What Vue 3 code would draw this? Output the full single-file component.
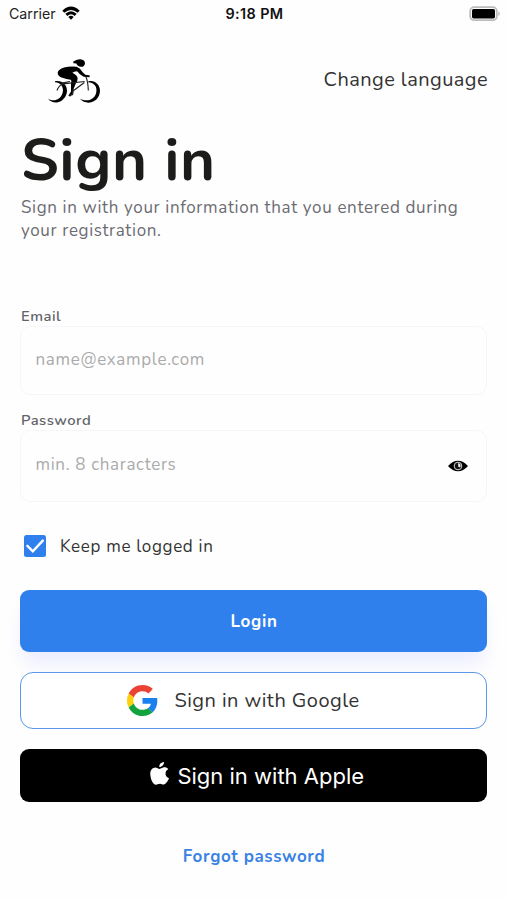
<script setup>
import { ref } from 'vue'

const email = ref('')
const password = ref('')
const showPassword = ref(false)
const keepLoggedIn = ref(true)
</script>

<template>
  <main class="screen">
    <div class="status">
      <div class="carrier">
        <span>Carrier</span>
        <svg class="wifi" viewBox="0 0 54 42">
          <path d="M1 14Q27-11 53 14L47 20.5Q27 3 7 20.5Z" />
          <path d="M10 23.5Q27 8 44 23.5L38 30Q27 20 16 30Z" />
          <path d="M19 33Q27 26 35 33L27 41Z" />
        </svg>
      </div>
      <strong class="clock">9:18 PM</strong>
      <svg class="battery" viewBox="0 0 32 16">
        <rect x="1.2" y="1.2" width="26.6" height="13" rx="4" fill="#fff" stroke="#bcbcbc" stroke-width="1.8" />
        <rect x="3" y="3" width="23" height="9.4" rx="1.6" fill="#000" />
        <path d="M29.5 5.2Q32 7.7 29.5 10.2Z" fill="#aaa" />
      </svg>
    </div>

    <header class="top">
      <svg class="logo" viewBox="24 24 156 134">
        <path d="M99 35Q110 26 121 27Q135 28 135 39Q134 50 123 50Q112 49 109 40L101 39Z" />
        <path d="M53 68Q55 57 72 52Q92 47 110 50Q121 54 128 66L136 74L150 76L148 81L131 80Q118 73 112 64Q106 62 97 68Q111 75 113 84Q113 92 107 101L101 116L100 127L91 139L85 137L93 124L93 99Q96 92 92 89Q80 88 67 83Q53 79 53 68Z" />
        <path d="M45 93C72 88 88 113 78 135C68 158 40 165 24 146C43 156 60 149 67 131C73 113 65 98 45 96Z" />
        <path d="M145 93C168 88 184 108 179 129C173 158 138 167 120 146C142 156 162 149 168 130C173 110 164 98 145 96Z" />
        <path class="frame" d="M51 121Q57 105 70 101L134 94M64 99L90 94M133 97L101 121M137 78Q144 92 145 121M99 118L98 133L87 137" />
      </svg>
      <a class="language">Change language</a>
    </header>

    <h1>Sign in</h1>
    <p class="intro">Sign in with your information that you entered during<br>your registration.</p>

    <form @submit.prevent>
      <label class="field-label" for="email">Email</label>
      <div class="field email">
        <input id="email" v-model="email" type="text" placeholder="name@example.com">
      </div>

      <label class="field-label second" for="password">Password</label>
      <div class="field password">
        <input id="password" v-model="password" :type="showPassword ? 'text' : 'password'" placeholder="min. 8 characters">
        <svg class="eye" viewBox="0 0 60 36" @click="showPassword = !showPassword">
          <path d="M0 18Q14 2 30 2Q46 2 60 18Q46 34 30 34Q14 34 0 18Z" />
          <circle cx="30" cy="18" r="11.5" fill="#111" stroke="#d2d2d2" stroke-width="3" />
          <path d="M30 10Q39 11 38 19Q36 24 31 20Z" fill="#eee" />
        </svg>
      </div>

      <label class="keep">
        <input v-model="keepLoggedIn" type="checkbox" class="native">
        <span class="check">
          <svg v-if="keepLoggedIn" viewBox="0 0 22 22"><path d="M3.4 10.8L8.8 16.3L18.8 5.6" /></svg>
        </span>
        <span class="keep-text">Keep me logged in</span>
      </label>

      <button class="login" type="submit"><span>Login</span></button>
      <button class="google" type="button">
        <svg class="g" viewBox="0 0 48 48">
          <path fill="#ea4335" d="M24 9.5c3.54 0 6.71 1.22 9.21 3.6l6.85-6.85C35.9 2.38 30.47 0 24 0 14.62 0 6.51 5.38 2.56 13.22l7.98 6.19C12.43 13.72 17.74 9.5 24 9.5z" />
          <path fill="#1a80ed" d="M46.98 24.55c0-1.57-.15-3.09-.38-4.55H24v9.02h12.94c-.58 2.96-2.26 5.48-4.78 7.18l7.73 6c4.51-4.18 7.09-10.36 7.09-17.65z" />
          <path fill="#fbd00c" d="M10.53 28.59A14.5 14.5 0 0 1 9.77 24c0-1.6.27-3.14.76-4.59l-7.98-6.19A23.9 23.9 0 0 0 0 24c0 3.88.92 7.54 2.56 10.78z" />
          <path fill="#13a33e" d="M24 48c6.48 0 11.93-2.13 15.89-5.81l-7.73-6c-2.15 1.45-4.92 2.3-8.16 2.3-6.26 0-11.57-4.22-13.47-9.91l-7.98 6.19C6.51 42.62 14.62 48 24 48z" />
        </svg>
        <span>Sign in with Google</span>
      </button>
      <button class="apple" type="button">
        <svg class="fruit" viewBox="0 0 57 69">
          <path d="M28 21C22 19 19 16 14 17C4 18 0 28 1 38C2 52 9 67 18 68C22 68 24 65 30 65C36 65 38 69 43 67C49 65 55 55 57 49C49 46 45 39 47 31C48 27 51 24 55 22C50 15 43 15 38 17Z" />
          <path d="M28 15C27 7 33 1 42 0C42 8 36 15 28 15Z" />
        </svg>
        <span>Sign in with Apple</span>
      </button>
      <a class="forgot">Forgot password</a>
    </form>
  </main>
</template>

<style>
body {
  background: #fefefe;
}
</style>

<style scoped>
.screen {
  box-sizing: border-box;
  width: 507px;
  height: 900px;
  overflow: hidden;
  background: #fefefe;
  color: #333;
  font-family: Nunito, Lato, "Noto Sans", sans-serif;
}
.status {
  display: grid;
  grid-template-columns: 1fr auto 1fr;
  align-items: center;
  height: 27px;
  padding: 0 6px 0 9px;
  font-family: Inter, "Liberation Sans", sans-serif;
  font-size: 14.2px;
  color: #222;
}
.carrier {
  display: flex;
  align-items: center;
  gap: 6px;
}
.wifi {
  width: 18px;
  height: 14px;
  margin-top: -2px;
  fill: #000;
}
.clock {
  font-size: 14.4px;
  font-weight: 600;
  letter-spacing: 0.4px;
  margin-left: -1px;
  color: #111;
}
.battery {
  width: 32px;
  height: 16px;
  justify-self: end;
}
.top {
  display: flex;
  justify-content: space-between;
  align-items: flex-start;
  height: 99px;
  padding: 31px 19px 0 48px;
  box-sizing: border-box;
}
.logo {
  width: 52px;
  height: 45px;
}
.frame {
  fill: none;
  stroke: #222;
  stroke-width: 3.4;
}
.language {
  margin-top: 10px;
  line-height: 24px;
  font-size: 20px;
  letter-spacing: 0.42px;
}
h1 {
  margin: 0;
  padding-left: 21px;
  font-size: 60px;
  line-height: 69px;
  font-weight: 700;
  letter-spacing: 0.5px;
  color: #1c1c1a;
}
.intro {
  margin: 0;
  padding: 1px 0 0 21px;
  font-size: 17px;
  line-height: 23px;
  letter-spacing: 0.64px;
  white-space: nowrap;
  color: #6b6c72;
}
form {
  display: flex;
  flex-direction: column;
  padding: 64px 20px 0;
}
.field-label {
  height: 20px;
  padding-left: 1px;
  line-height: 21px;
  font-size: 14.8px;
  font-weight: 600;
  letter-spacing: 0.5px;
  color: #626368;
}
.second {
  margin-top: 15px;
}
.field {
  display: flex;
  align-items: center;
  box-sizing: border-box;
  height: 69px;
  padding: 0 18px 3px 14.5px;
  border: 1.5px solid #f5f6f7;
  border-radius: 10px;
}
.password {
  height: 72px;
}
.field input {
  flex: 1;
  min-width: 0;
  padding: 0;
  border: 0;
  outline: 0;
  background: none;
  font: 17px Nunito, Lato, "Noto Sans", sans-serif;
  letter-spacing: 0.67px;
}
.field input::placeholder {
  color: #aaa;
  opacity: 1;
}
.eye {
  width: 20px;
  height: 12px;
  margin-top: 3px;
}
.keep {
  display: flex;
  align-items: center;
  height: 24px;
  margin: 32px 0 0 4px;
}
.native {
  position: absolute;
  opacity: 0;
}
.check {
  width: 22px;
  height: 22px;
  border-radius: 2.5px;
  background: #2f80ed;
}
.check svg {
  display: block;
  fill: none;
  stroke: #fff;
  stroke-width: 2.4;
  stroke-linecap: round;
}
.keep-text {
  margin-left: 14px;
  font-size: 17px;
  letter-spacing: 0.67px;
}
button {
  display: flex;
  align-items: center;
  justify-content: center;
  box-sizing: border-box;
  padding: 0;
  border: 0;
  font-family: inherit;
}
.login {
  height: 62px;
  margin-top: 32px;
  padding-left: 1px;
  border-radius: 9px;
  background: #2f80ed;
  box-shadow: 0 14px 18px -3px #ebecff;
  color: #fff;
  font-size: 17px;
  font-weight: 700;
  letter-spacing: 0.65px;
}
.google {
  position: relative;
  height: 57px;
  margin-top: 20px;
  padding-right: 20px;
  border: 1.4px solid #5b98e8;
  border-radius: 13px;
  background: #fff;
  color: #333;
  font-size: 20px;
  letter-spacing: 0.46px;
}
.g {
  width: 31px;
  height: 31px;
  margin-right: 16px;
}
.apple {
  height: 53px;
  margin-top: 20px;
  padding-left: 7.5px;
  border-radius: 9px;
  background: #000;
  color: #fff;
  font-family: Inter, sans-serif;
  font-size: 22px;
}
.fruit {
  width: 19px;
  height: 23px;
  margin: -5px 8px 0 0;
  fill: #fff;
}
.forgot {
  align-self: center;
  margin: 43px 0 0 1px;
  line-height: 24px;
  font-size: 17px;
  font-weight: 700;
  letter-spacing: 0.6px;
  color: #3a82e4;
}
</style>
